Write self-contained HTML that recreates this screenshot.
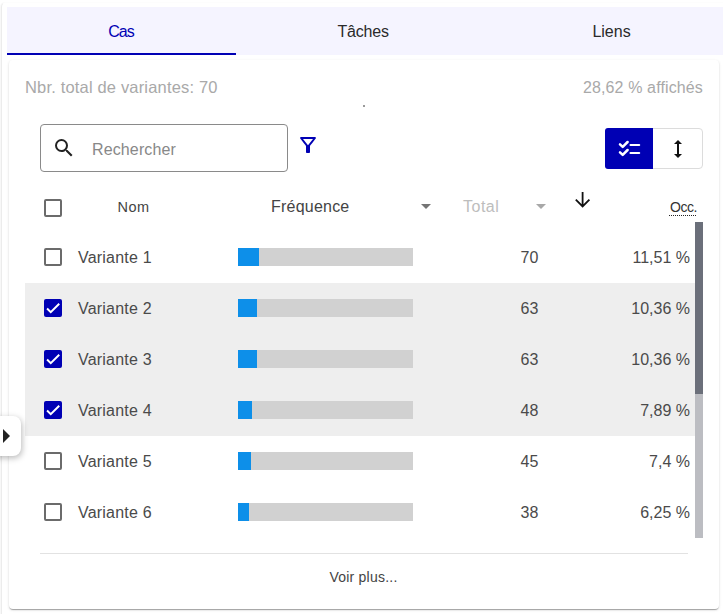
<!DOCTYPE html>
<html>
<head>
<meta charset="utf-8">
<style>
html,body{margin:0;padding:0;}
body{width:723px;height:614px;overflow:hidden;background:#fff;position:relative;font-family:"Liberation Sans",sans-serif;color:#4a4a4a;}
.abs{position:absolute;}
.t{position:absolute;white-space:nowrap;line-height:20px;}
#outer{left:1px;top:2px;width:760px;height:640px;border-radius:5px 0 0 0;border-left:1px solid #ececec;border-top:1px solid #fdfdfd;box-shadow:-1px 0 1px rgba(0,0,0,.03);background:#fff;}
#tabs{left:7px;top:7px;width:726px;height:48px;background:#f5f4ff;}
#ink{left:7px;top:53px;width:229px;height:2px;background:#0000b4;}
#card{left:9px;top:60px;width:710px;height:549px;border-radius:4px;background:#fff;
 box-shadow:0 2px 1px -1px rgba(0,0,0,.2),0 1px 1px 0 rgba(0,0,0,.14),0 1px 3px 0 rgba(0,0,0,.12);}
#search{left:40px;top:124px;width:246px;height:46px;border:1px solid #8a8a8a;border-radius:4px;background:#fff;}
#tg{left:605px;top:128px;width:96px;height:39px;border:1px solid #dcdcdc;border-radius:4px;background:#fff;overflow:hidden;}
#tgon{left:605px;top:128px;width:48px;height:41px;background:#0000b4;border-radius:3px 0 0 3px;}
.sel{left:25px;width:670px;height:51px;background:#eeeeee;}
.cb{width:14px;height:14px;border:2px solid #6b6b6b;border-radius:2px;background:#fff;left:44px;}
.cbx{width:18px;height:18px;border-radius:2px;background:#0000b4;left:44px;}
.bar{left:238px;width:175px;height:18px;background:#d1d1d1;}
.bar i{display:block;height:18px;background:#0d8fe9;}
.name{left:78px;font-size:16px;letter-spacing:0.2px;}
.num{font-size:16px;}
.r{text-align:right;}
#handle{left:-10px;top:416px;width:31px;height:40px;border-radius:8px;background:#fff;box-shadow:1px 2px 6px rgba(0,0,0,.28);}
</style>
</head>
<body>
<div class="abs" id="outer"></div>
<div class="abs" id="tabs"></div>
<div class="abs" id="ink"></div>
<div class="t" id="tab1" style="left:108.3px;top:22px;font-size:16px;letter-spacing:-1px;color:#0000b4;">Cas</div>
<div class="t" id="tab2" style="left:337.4px;top:22px;font-size:16px;letter-spacing:-0.17px;color:#2a2a2a;">Tâches</div>
<div class="t" id="tab3" style="left:551.5px;width:120px;text-align:center;top:22px;font-size:16px;color:#2a2a2a;">Liens</div>

<div class="abs" id="card"></div>

<div class="t" id="nbr" style="left:25px;top:77px;font-size:16.5px;letter-spacing:0.17px;color:#a9a9a9;">Nbr. total de variantes: 70</div>
<div class="t r" id="aff" style="right:20px;top:78px;font-size:16px;letter-spacing:0.13px;color:#a9a9a9;">28,62 % affichés</div>
<div class="abs" style="left:363px;top:105px;width:2px;height:2px;background:#9a9a9a;"></div>

<div class="abs" id="search"></div>
<svg class="abs" style="left:52px;top:136px;" width="24" height="24" viewBox="0 0 24 24"><path fill="#222" d="M15.5 14h-.79l-.28-.27A6.471 6.471 0 0 0 16 9.5 6.5 6.5 0 1 0 9.500 16c1.610 0 3.090-.59 4.230-1.570l.27.280v.79l5 4.990L20.490 19l-4.990-5zm-6 0C7.010 14 5 11.990 5 9.500S7.010 5 9.500 5 14 7.010 14 9.500 11.990 14 9.500 14z"/></svg>
<div class="t" id="rech" style="left:92px;top:140px;font-size:16px;letter-spacing:0.13px;color:#888;">Rechercher</div>
<svg class="abs" style="left:296px;top:133px;" width="24" height="24" viewBox="0 0 24 24"><path fill="#0000b4" d="M7 6h10l-5.010 6.300L7 6zm-2.750-.39C6.270 8.200 10 13 10 13v6c0 .55.450 1 1 1h2c.55 0 1-.45 1-1v-6s3.720-4.800 5.740-7.390A.998.998 0 0 0 18.950 4H5.040c-.83 0-1.300.95-.79 1.610z"/></svg>

<div class="abs" id="tg"></div>
<div class="abs" id="tgon"></div>
<svg class="abs" style="left:610px;top:132px;" width="40" height="32" viewBox="610 132 40 32"><g fill="none" stroke="#fff" stroke-width="2.1" stroke-linecap="round" stroke-linejoin="round"><path d="M630.500 145H639.200M630.500 153H639.200"/><path stroke-width="2.5" d="M620 144.300 622.700 146.900 627.600 142M620 152.300 622.700 154.900 627.600 150"/></g></svg>
<svg class="abs" style="left:666px;top:137px;" width="24" height="24" viewBox="0 0 24 24"><path fill="#111" d="M13 6.990h3L12 3 8 6.990h3v10.020H8L12 21l4-3.990h-3z"/></svg>

<!-- header -->
<div class="abs cb" style="top:199px;"></div>
<div class="t" id="nom" style="left:117.5px;top:197px;font-size:14.5px;letter-spacing:0.5px;color:#444;">Nom</div>
<div class="t" id="freq" style="left:271px;top:197px;font-size:16px;letter-spacing:0.22px;color:#444;">Fréquence</div>
<div class="abs" style="left:421px;top:204px;width:0;height:0;border-left:5px solid transparent;border-right:5px solid transparent;border-top:5px solid #757575;"></div>
<div class="t" id="total" style="left:463px;top:197px;font-size:16px;letter-spacing:0.5px;color:#bdbdbd;">Total</div>
<div class="abs" style="left:536px;top:204px;width:0;height:0;border-left:5px solid transparent;border-right:5px solid transparent;border-top:5px solid #a8a8a8;"></div>
<svg class="abs" style="left:570px;top:186px;" width="26" height="26" viewBox="570 186 26 26"><g fill="none" stroke="#111" stroke-width="1.8"><path d="M582.600 192V206.500M575.800 199.600 582.600 206.500 589.400 199.600"/></g></svg>
<div class="t" id="occ" style="left:670px;top:197px;font-size:14px;letter-spacing:-0.45px;color:#333;">Occ.</div>
<div class="abs" style="left:669px;top:215px;width:27px;height:0;border-top:1px dotted #222;"></div>

<!-- selected rows -->
<div class="abs sel" style="top:283px;height:153px;"></div>

<!-- rows -->
<div class="abs cb" style="top:248px;"></div>
<div class="t name" style="top:248px;">Variante 1</div>
<div class="abs bar" style="top:248px;"><i style="width:20.9px"></i></div>
<div class="t num n1" style="left:520.5px;top:248px;">70</div>
<div class="t num r" style="right:33px;top:248px;">11,51 %</div>

<div class="abs cbx" style="top:299px;"></div>
<svg class="abs" style="left:44px;top:299px;" width="18" height="18" viewBox="0 0 24 24"><path fill="none" stroke="#fff" stroke-width="2.6" d="M4.100 12.700 9 17.600 20.300 6.300"/></svg>
<div class="t name" style="top:299px;">Variante 2</div>
<div class="abs bar" style="top:299px;"><i style="width:18.7px"></i></div>
<div class="t num n1" style="left:520.5px;top:299px;">63</div>
<div class="t num r" style="right:33px;top:299px;">10,36 %</div>

<div class="abs cbx" style="top:350px;"></div>
<svg class="abs" style="left:44px;top:350px;" width="18" height="18" viewBox="0 0 24 24"><path fill="none" stroke="#fff" stroke-width="2.6" d="M4.100 12.700 9 17.600 20.300 6.300"/></svg>
<div class="t name" style="top:350px;">Variante 3</div>
<div class="abs bar" style="top:350px;"><i style="width:18.7px"></i></div>
<div class="t num n1" style="left:520.5px;top:350px;">63</div>
<div class="t num r" style="right:33px;top:350px;">10,36 %</div>

<div class="abs cbx" style="top:401px;"></div>
<svg class="abs" style="left:44px;top:401px;" width="18" height="18" viewBox="0 0 24 24"><path fill="none" stroke="#fff" stroke-width="2.6" d="M4.100 12.700 9 17.600 20.300 6.300"/></svg>
<div class="t name" style="top:401px;">Variante 4</div>
<div class="abs bar" style="top:401px;"><i style="width:14.2px"></i></div>
<div class="t num n1" style="left:520.5px;top:401px;">48</div>
<div class="t num r" style="right:33px;top:401px;">7,89 %</div>

<div class="abs cb" style="top:452px;"></div>
<div class="t name" style="top:452px;">Variante 5</div>
<div class="abs bar" style="top:452px;"><i style="width:13.4px"></i></div>
<div class="t num n1" style="left:520.5px;top:452px;">45</div>
<div class="t num r" style="right:33px;top:452px;">7,4 %</div>

<div class="abs cb" style="top:503px;"></div>
<div class="t name" style="top:503px;">Variante 6</div>
<div class="abs bar" style="top:503px;"><i style="width:11.3px"></i></div>
<div class="t num n1" style="left:520.5px;top:503px;">38</div>
<div class="t num r" style="right:33px;top:503px;">6,25 %</div>

<!-- scrollbar -->
<div class="abs" style="left:695px;top:222px;width:8px;height:316px;background:#bcbdc2;"></div>
<div class="abs" style="left:695px;top:222px;width:8px;height:172px;background:#6b6f7a;"></div>

<!-- footer -->
<div class="abs" style="left:40px;top:553px;width:648px;height:1px;background:#e2e2e2;"></div>
<div class="t" id="voir" style="left:303.5px;width:120px;text-align:center;top:567px;font-size:14px;letter-spacing:0.23px;color:#444;">Voir plus...</div>

<!-- handle -->
<div class="abs" id="handle"></div>
<div class="abs" style="left:3px;top:429px;width:0;height:0;border-top:7px solid transparent;border-bottom:7px solid transparent;border-left:7px solid #222;"></div>
</body>
</html>
